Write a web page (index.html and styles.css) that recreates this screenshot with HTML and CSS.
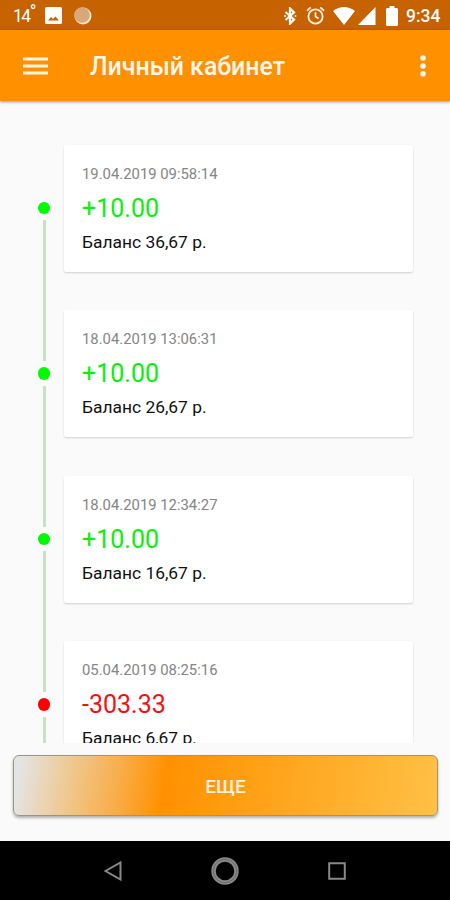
FILE: index.html
```html
<!DOCTYPE html>
<html lang="ru">
<head>
<meta charset="utf-8">
<title>Личный кабинет</title>
<link rel="stylesheet" href="styles.css">
</head>
<body>
<div class="screen">
  <header class="status">
    <span class="temp">14<span class="degree">°</span></span>
    <svg class="photo" width="17" height="17" viewBox="0 0 17 17"><path fill="#fff" fill-rule="evenodd" d="M1.500 0h14A1.500 1.500 0 0 1 17 1.500v14a1.500 1.500 0 0 1-1.500 1.500h-14A1.500 1.500 0 0 1 0 15.500v-14A1.500 1.500 0 0 1 1.500 0zM3 13.500h11l-3.500-4-2.500 2.500-2-2z"/></svg>
    <svg class="moon" width="18" height="18" viewBox="0 0 18 18"><circle cx="9" cy="9" r="8.500" fill="#ffe7c8"/><circle cx="8" cy="8" r="7.800" fill="#d8a77b"/></svg>
    <div class="system">
      <svg width="13" height="18" viewBox="0 0 13 18" fill="none" stroke="#fff" stroke-width="2.200"><path d="M1.500 5l8.500 7.500-4 4V1.500l4 4L1.500 13"/><path d="M11.500 8v2M1 8v2" stroke-width="1.500"/></svg>
      <svg class="alarm" width="19" height="19" viewBox="0 0 20 20" fill="none" stroke="#fff2e4" stroke-width="1.900"><circle cx="10" cy="11" r="7.500"/><path d="M1 5l4-3.500M19 5l-4-3.500M10 6.500V11l3.200 2.200"/></svg>
      <svg class="wifi" width="22" height="18" viewBox="0 0 22 18"><path fill="#fff" d="M0 4Q11-4 22 4L11 18z"/></svg>
      <svg class="signal" width="18" height="18" viewBox="0 0 18 18"><path fill="#fff" d="M0 18L17.500 0v18z"/></svg>
      <svg class="battery" width="12" height="20" viewBox="0 0 12 20"><path fill="#fff" d="M3.500 0h5v2H11l1 1v16l-1 1H1l-1-1V3l1-1h2.500z"/></svg>
      <span class="clock">9:34</span>
    </div>
  </header>
  <div class="appbar">
    <svg width="25" height="18" viewBox="0 0 25 18"><path fill="#fff3e4" d="M0 .5h25v3H0zM0 7.500h25v3H0zM0 14.500h25v3H0z"/></svg>
    <h1>Личный кабинет</h1>
    <svg class="more" width="6" height="22" viewBox="0 0 6 22" fill="#fff7ee"><circle cx="3" cy="3" r="2.800"/><circle cx="3" cy="11" r="2.800"/><circle cx="3" cy="18.700" r="2.800"/></svg>
  </div>
  <main class="timeline">
    <section class="entry first">
      <div class="rail"><i></i><b></b><i></i></div>
      <article class="card"><time>19.04.2019 09:58:14</time><strong>+10.00</strong><p>Баланс 36,67 р.</p></article>
    </section>
    <section class="entry">
      <div class="rail"><i></i><b></b><i></i></div>
      <article class="card"><time>18.04.2019 13:06:31</time><strong>+10.00</strong><p>Баланс 26,67 р.</p></article>
    </section>
    <section class="entry">
      <div class="rail"><i></i><b></b><i></i></div>
      <article class="card"><time>18.04.2019 12:34:27</time><strong>+10.00</strong><p>Баланс 16,67 р.</p></article>
    </section>
    <section class="entry debit">
      <div class="rail"><i></i><b></b><i></i></div>
      <article class="card"><time>05.04.2019 08:25:16</time><strong>-303.33</strong><p>Баланс 6,67 р.</p></article>
    </section>
  </main>
  <div class="action"><button>ЕЩЕ</button></div>
  <nav class="navbar">
    <svg width="18" height="20" viewBox="0 0 18 20"><path d="M1.500 10L16.500 1.500v17z"/></svg>
    <svg width="30" height="30" viewBox="0 0 30 30"><circle cx="15" cy="15" r="11.500" style="stroke-width:4.500"/><circle class="ring" cx="15" cy="15" r="11.700"/></svg>
    <svg width="18" height="18" viewBox="0 0 18 18"><path d="M1.200 1.200h15.600v15.600H1.200z"/></svg>
  </nav>
</div>
</body>
</html>
```
FILE: styles.css
```css
* { box-sizing: border-box; }
body { margin: 0; font-family: Roboto, sans-serif; background: #fafafa; }
svg { display: block; flex: none; }
.screen { width: 450px; height: 900px; display: flex; flex-direction: column; overflow: hidden; }
.status { height: 30px; flex: none; background: #c66200; color: #fff; display: flex; align-items: center; padding: 1px 9px 0 13px; }
.temp { font-size: 17.5px; line-height: 20px; width: 32px; letter-spacing: -1.5px; white-space: nowrap; }
.degree { font-size: 18px; vertical-align: 4px; line-height: 0; }
.moon { margin-left: 12px; }
.system { margin-left: auto; display: flex; align-items: center; }
.alarm { margin-left: 9px; }
.wifi { margin-left: 8px; }
.signal { margin-left: 3px; }
.battery { margin-left: 10px; }
.clock { width: 35px; margin-left: 8px; font-size: 17.5px; font-weight: 500; white-space: nowrap; }
.appbar { height: 70.5px; flex: none; background: #ff9100; display: flex; align-items: center; padding: 1px 24px 0 23px; box-shadow: 0 1px 3px rgba(0,0,0,.4); z-index: 1; }
.appbar h1 { margin: 3px 0 0 42px; font-size: 24.9px; line-height: 32px; font-weight: 500; color: #fff7ee; white-space: nowrap; }
.more { margin-left: auto; }
.timeline { height: 642.5px; flex: none; overflow: hidden; padding-top: 24.7px; }
.entry { height: 165.5px; display: flex; padding: 19.5px 37px 19.5px 37px; }
.rail { width: 14px; margin: -19.5px 13px -19.5px 0; display: flex; flex-direction: column; align-items: center; gap: 6px; }
.rail i { width: 3px; flex: 1; background: #c8dfc8; }
.first .rail i:first-child { visibility: hidden; }
.rail b { width: 12.5px; height: 12.5px; border-radius: 50%; background: #00fa00; }
.card { flex: 1; height: 127px; background: #fff; border-radius: 2px; box-shadow: 0 1px 2px rgba(0,0,0,.17); padding: 20px 18px 0; }
.card time { display: block; font-size: 14.85px; line-height: 19px; color: #858585; }
.card strong { display: block; font-size: 25px; line-height: 30px; font-weight: 400; color: #0af00a; margin-top: 10px; }
.card p { margin: 8px 0 0; font-size: 17.4px; line-height: 20px; color: #111; }
.debit .rail b { background: #f00; }
.debit .card strong { color: #f51010; }
.action { flex: none; height: 98px; padding: 12px 12px 0 13px; }
button { display: block; width: 100%; height: 61px; border: 1.5px solid #999488; border-radius: 6px; background: linear-gradient(100deg, #e4e4e4 2%, #efc88f 14%, #f8ae4b 25%, #ff9100 36%, #ffc145 100%); background-origin: border-box; box-shadow: 0 2px 3px rgba(0,0,0,.3); color: #fff1df; font: 500 19px Roboto, sans-serif; padding: 1px 0 0; }
.navbar { height: 59px; flex: none; background: #000; display: flex; align-items: center; justify-content: space-between; padding: 0 104px 0 104px; }
.navbar svg { fill: none; stroke: #898989; stroke-width: 2; }
.navbar .ring { stroke: #6b6b6b; stroke-width: 1; }
```
